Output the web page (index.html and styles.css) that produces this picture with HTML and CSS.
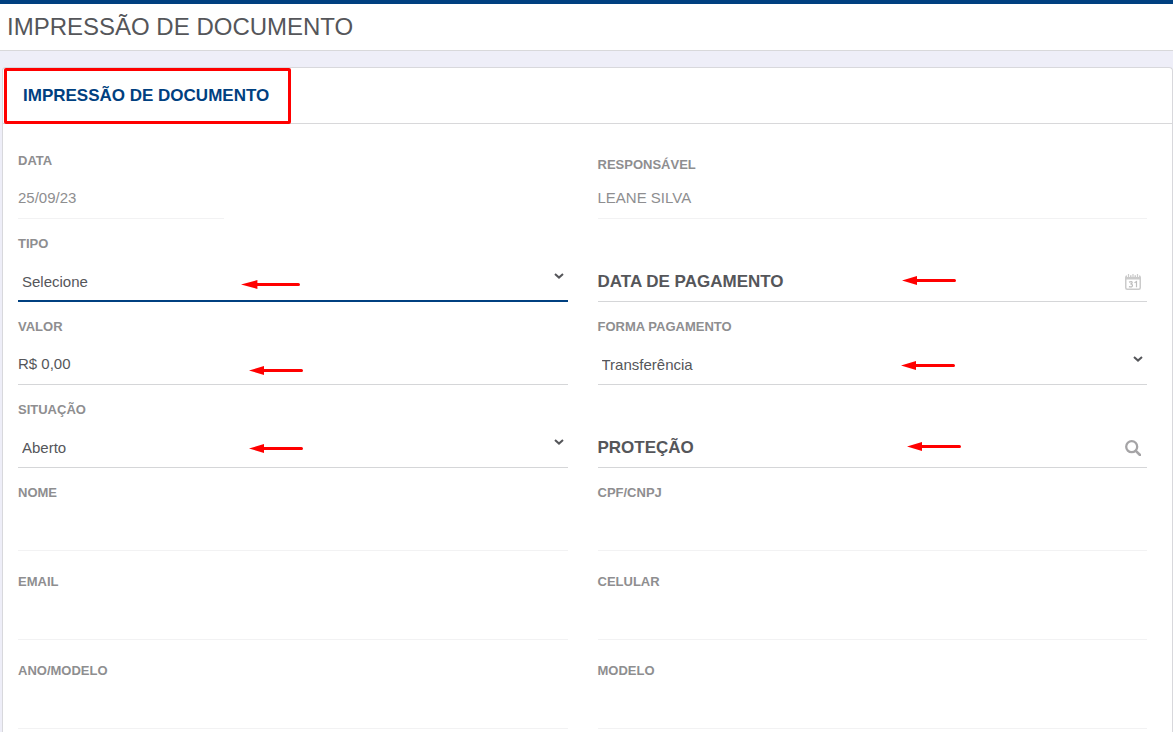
FILE: index.html
```html
<!DOCTYPE html>
<html lang="pt-BR">
<head>
    <meta charset="UTF-8">
    <meta name="viewport" content="width=device-width, initial-scale=1.0">
    <title>Impressão de Documento</title>
    <link rel="stylesheet" href="styles.css">
</head>
<body>
    <svg class="symbols" aria-hidden="true">
        <symbol id="arrow" viewBox="0 0 54 9" preserveAspectRatio="none">
            <path d="M0 4.5L15 0V3H52.5Q54 3 54 4.5T52.5 6H15V9Z" fill="#ff0000"/>
        </symbol>
        <symbol id="chevron" viewBox="0 0 10 6">
            <path d="M1 1L5 4.6L9 1" fill="none" stroke="#55565a" stroke-width="2"/>
        </symbol>
    </svg>

    <header class="page-header">
        <h1>IMPRESSÃO DE DOCUMENTO</h1>
    </header>

    <main class="panel">
        <nav class="tabs">
            <a class="tab" href="#documento">IMPRESSÃO DE DOCUMENTO</a>
        </nav>

        <form class="form" id="documento">
            <div class="field">
                <label for="data">DATA</label>
                <input class="control short" id="data" type="text" value="25/09/23" disabled>
            </div>
            <div class="field">
                <label for="responsavel">RESPONSÁVEL</label>
                <input class="control compact" id="responsavel" type="text" value="LEANE SILVA" disabled>
            </div>

            <div class="field">
                <label for="tipo">TIPO</label>
                <select class="control active" id="tipo">
                    <option>Selecione</option>
                </select>
                <svg class="chevron"><use href="#chevron"/></svg>
                <svg class="arrow arrow-tipo"><use href="#arrow"/></svg>
            </div>
            <div class="field">
                <div class="inline-field">
                    <label for="pagamento">DATA DE PAGAMENTO</label>
                    <input id="pagamento" type="text">
                    <button type="button" aria-label="Abrir calendário">
                        <svg width="16" height="16" viewBox="0 0 16 16">
                            <rect x=".75" y="2" width="14.5" height="13.25" rx="1.5" fill="#fff" stroke="#cbcbcb" stroke-width="1.5"/>
                            <path d="M1 2h14v3.5H1z" fill="#cbcbcb"/>
                            <path d="M3.5 0v3M8 0v3M12.5 0v3" stroke="#fff" stroke-width="3"/>
                            <path d="M3.5 0v3M8 0v3M12.5 0v3" stroke="#cbcbcb" stroke-width="1.2"/>
                            <path d="M4 8.1Q7.2 6.8 7.2 8.6Q7.2 9.9 5.3 10Q7.5 10 7.5 11.5Q7.3 13.7 3.9 12.6M9.5 8.8L11.5 7.5V13.2" fill="none" stroke="#bebebe" stroke-width="1.2"/>
                        </svg>
                    </button>
                </div>
                <svg class="arrow arrow-pagamento"><use href="#arrow"/></svg>
            </div>

            <div class="field">
                <label for="valor">VALOR</label>
                <input class="control" id="valor" type="text" value="R$ 0,00">
                <svg class="arrow arrow-valor"><use href="#arrow"/></svg>
            </div>
            <div class="field">
                <label for="forma">FORMA PAGAMENTO</label>
                <select class="control" id="forma">
                    <option>Transferência</option>
                </select>
                <svg class="chevron"><use href="#chevron"/></svg>
                <svg class="arrow arrow-forma"><use href="#arrow"/></svg>
            </div>

            <div class="field">
                <label for="situacao">SITUAÇÃO</label>
                <select class="control" id="situacao">
                    <option>Aberto</option>
                </select>
                <svg class="chevron"><use href="#chevron"/></svg>
                <svg class="arrow arrow-situacao"><use href="#arrow"/></svg>
            </div>
            <div class="field">
                <div class="inline-field">
                    <label for="protecao">PROTEÇÃO</label>
                    <input id="protecao" type="text">
                    <button type="button" aria-label="Pesquisar proteção">
                        <svg width="16" height="16" viewBox="0 0 16 16">
                            <circle cx="6.7" cy="6.7" r="5.5" fill="none" stroke="#a5a4a6" stroke-width="2.3"/>
                            <path d="M10.8 10.8L15 15" stroke="#a5a4a6" stroke-width="2.6" stroke-linecap="round"/>
                        </svg>
                    </button>
                </div>
                <svg class="arrow arrow-protecao"><use href="#arrow"/></svg>
            </div>

            <div class="field">
                <label for="nome">NOME</label>
                <input class="control" id="nome" type="text" disabled>
            </div>
            <div class="field">
                <label for="cpf">CPF/CNPJ</label>
                <input class="control" id="cpf" type="text" disabled>
            </div>

            <div class="field tall">
                <label for="email">EMAIL</label>
                <input class="control" id="email" type="text" disabled>
            </div>
            <div class="field tall">
                <label for="celular">CELULAR</label>
                <input class="control" id="celular" type="text" disabled>
            </div>

            <div class="field tall">
                <label for="ano">ANO/MODELO</label>
                <input class="control" id="ano" type="text" disabled>
            </div>
            <div class="field tall">
                <label for="modelo">MODELO</label>
                <input class="control" id="modelo" type="text" disabled>
            </div>
        </form>
    </main>
</body>
</html>
```
FILE: styles.css
```css
* {
    box-sizing: border-box;
}

body {
    display: flex;
    flex-direction: column;
    min-height: 100vh;
    margin: 0;
    background-color: #eeeef8;
    font-family: "Liberation Sans", Arial, sans-serif;
    font-size: 15px;
    color: #55565a;
}

.symbols {
    display: none;
}

.page-header {
    padding: 8px 7px;
    background-color: #fff;
    border-top: 4px solid #004080;
    border-bottom: 1px solid #d8d8da;
}

.page-header h1 {
    margin: 0;
    font-size: 24px;
    font-weight: normal;
    line-height: 30px;
}

.panel {
    flex: 1;
    margin: 16px 0 0 2px;
    background-color: #fff;
    border: 1px solid #d8d8dc;
    border-bottom: none;
    border-radius: 4px 4px 0 0;
}

.tabs {
    display: flex;
    height: 56px;
    padding-left: 1px;
    border-bottom: 1px solid #d8d8da;
}

.tab {
    height: 56px;
    padding: 0 19px 0 16px;
    border: 3px solid #ff0000;
    border-radius: 2px;
    font-size: 17px;
    font-weight: bold;
    line-height: 50px;
    color: #004080;
    text-decoration: none;
}

.form {
    display: grid;
    grid-template-columns: 1fr 1fr;
    column-gap: 30px;
    padding: 12px 25px 0 15px;
}

.field {
    position: relative;
    display: flex;
    flex-direction: column;
    justify-content: flex-end;
    height: 83px;
}

.field.tall {
    height: 89px;
}

.field label {
    font-size: 13px;
    font-weight: bold;
    line-height: 20px;
    color: #8e8e90;
}

.control {
    appearance: none;
    width: 100%;
    height: 48px;
    margin: 0;
    padding: 5px 0 0;
    background-color: transparent;
    border: none;
    border-bottom: 1px solid #d5d6d8;
    border-radius: 0;
    outline: none;
    font: inherit;
    color: #55565a;
}

select.control {
    padding: 7px 20px 0 4px;
}

.control:disabled {
    color: #8e8e90;
    border-bottom-color: #f2f2f3;
}

.control.short {
    width: 37.5%;
}

.control.compact {
    height: 44px;
    padding-top: 1px;
}

select.active {
    padding-top: 9px;
    border-bottom: 2px solid #004080;
}

.inline-field {
    display: flex;
    align-items: center;
    height: 39px;
    border-bottom: 1px solid #d5d6d8;
}

.inline-field label {
    font-size: 17px;
    color: #55565a;
}

.inline-field input {
    flex: 1;
    min-width: 0;
    border: none;
    outline: none;
    font: inherit;
}

.inline-field button {
    display: flex;
    padding: 0 6px;
    background: none;
    border: none;
    cursor: pointer;
}

.chevron {
    position: absolute;
    right: 4px;
    bottom: 23px;
    width: 10px;
    height: 6px;
    pointer-events: none;
}

/* setas que indicam os campos a preencher */
.arrow {
    position: absolute;
    width: 54px;
    height: 9px;
    pointer-events: none;
}

.arrow-tipo {
    left: 223px;
    bottom: 13px;
    width: 59px;
}

.arrow-valor {
    left: 231px;
    bottom: 10px;
}

.arrow-situacao {
    left: 231px;
    bottom: 15px;
}

.arrow-pagamento {
    left: 304px;
    bottom: 17px;
}

.arrow-forma {
    left: 303px;
    bottom: 15px;
}

.arrow-protecao {
    left: 309px;
    bottom: 17px;
}
```
